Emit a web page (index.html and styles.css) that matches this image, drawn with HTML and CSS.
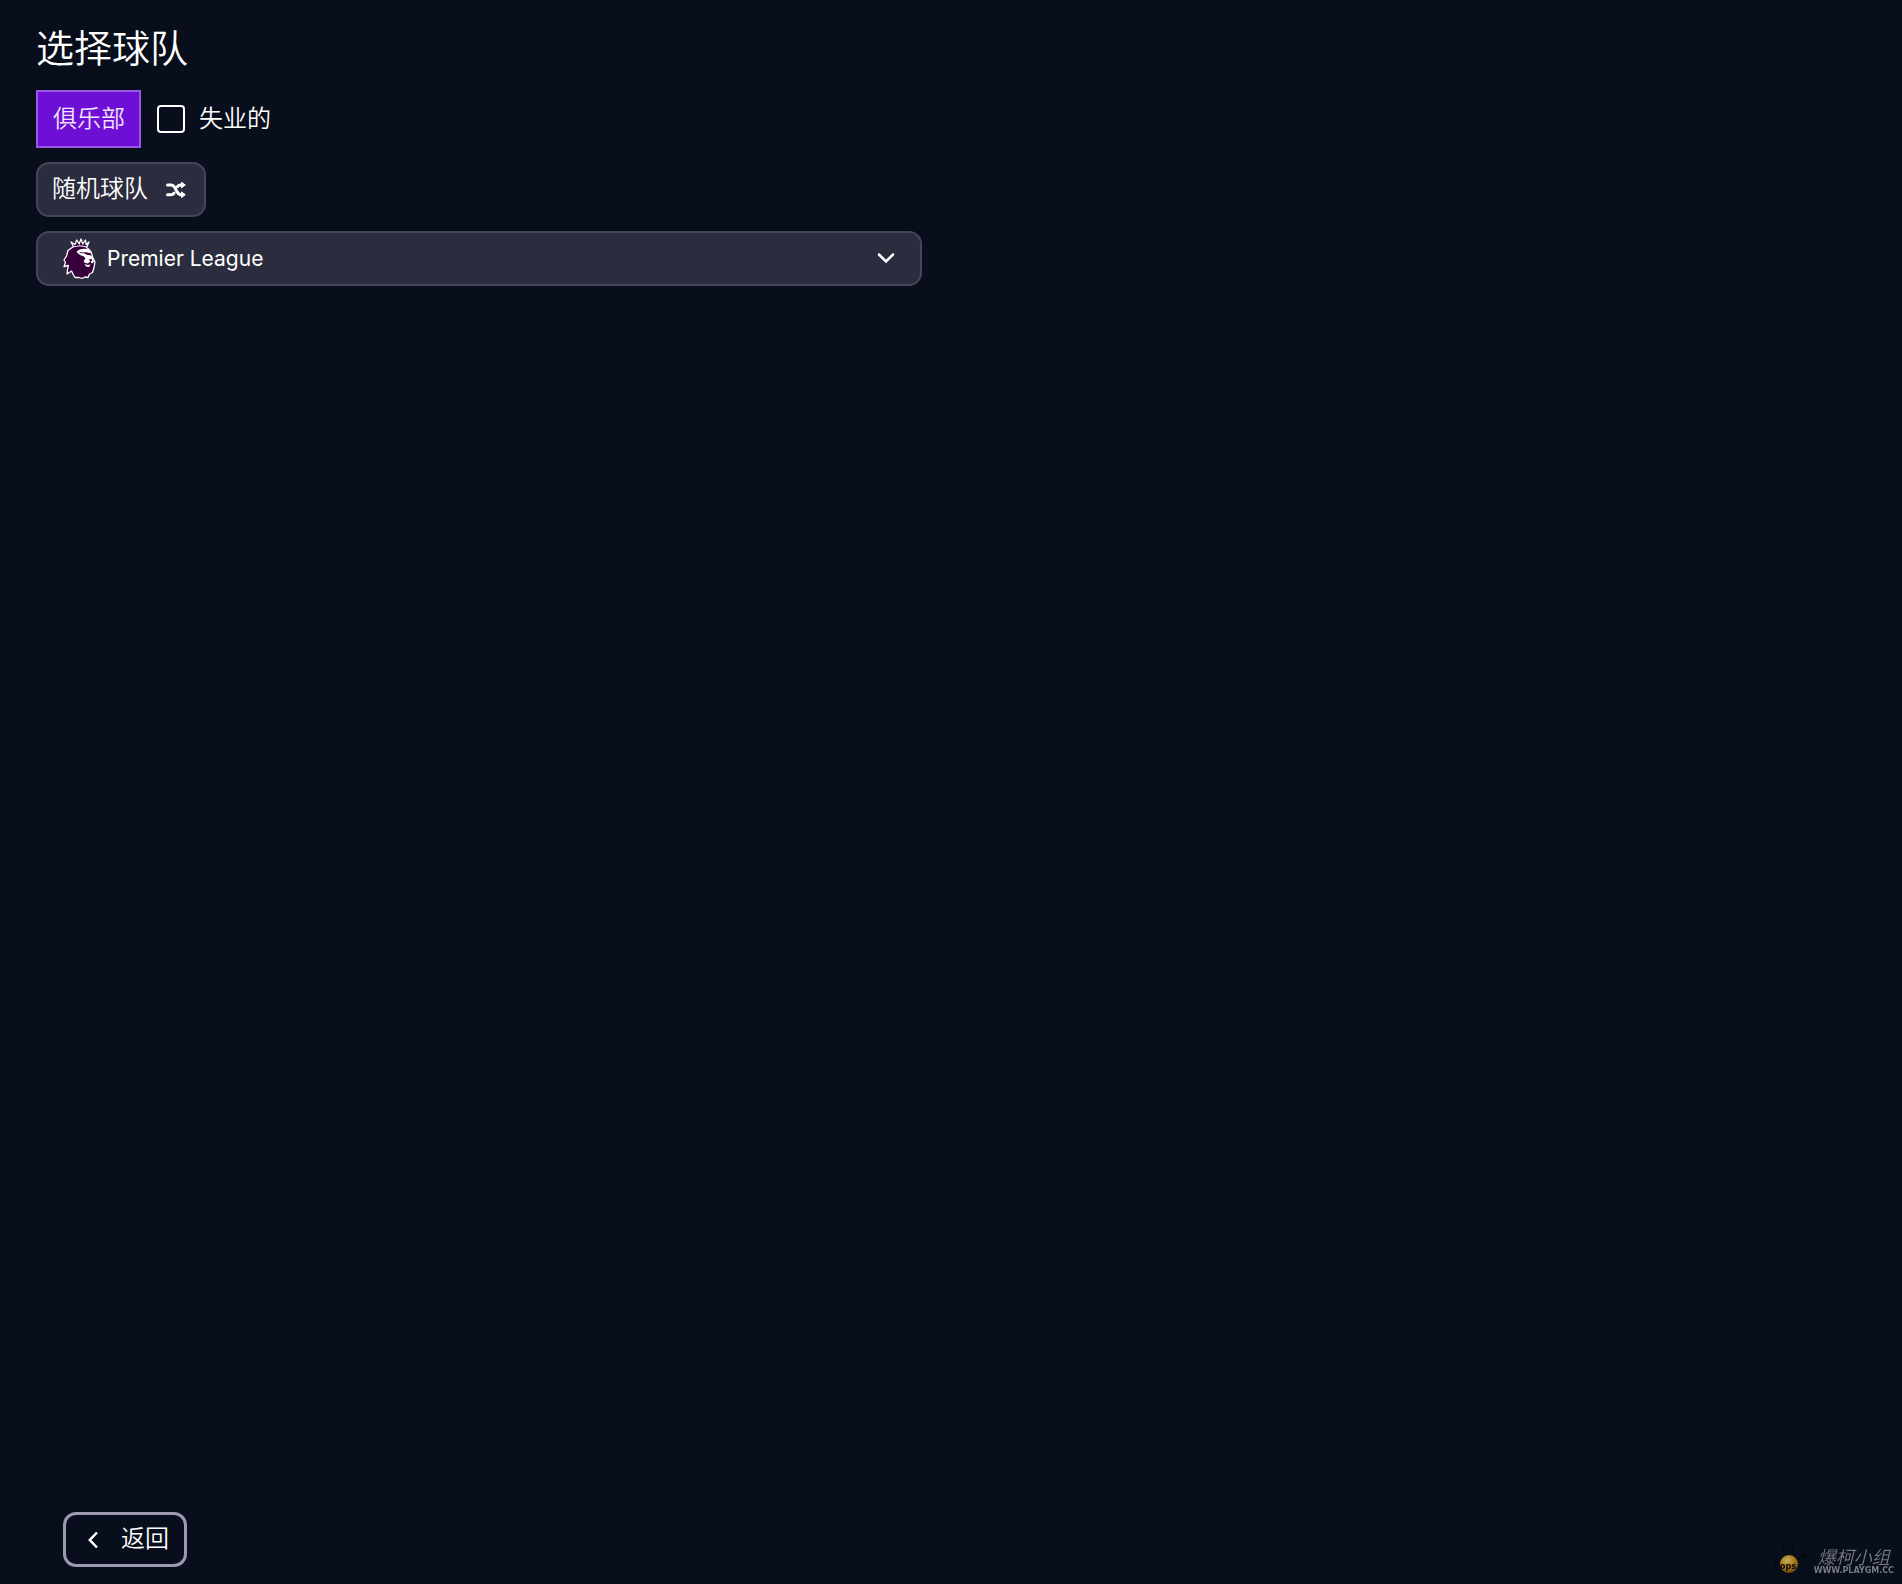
FILE: index.html
```html
<!DOCTYPE html>
<html lang="zh-CN">
<head>
    <meta charset="UTF-8">
    <meta name="viewport" content="width=device-width, initial-scale=1.0">
    <title>选择球队</title>
    <link rel="stylesheet" href="styles.css">
</head>
<body>
    <main class="page">
        <form class="team-form">
            <h1>选择球队</h1>
            <!-- Team type -->
            <div class="type-row">
                <button type="button" class="tab-button">俱乐部</button>
                <div class="check-group">
                    <input type="checkbox" id="unemployed" name="unemployed">
                    <label for="unemployed">失业的</label>
                </div>
            </div>
            <!-- Random team -->
            <button type="button" class="random-button">
                <span class="button-text">随机球队</span>
                <svg class="shuffle-icon" viewBox="0 0 20 18" aria-hidden="true">
                    <path d="M1.500 4h3.500c2 0 3 1 4 2.800l2 4c1 1.800 2 2.900 4 2.900h1M1.500 13.700h3.500c1.300 0 2.200-.5 3-1.500M11.500 5.500C12.300 4.500 13.200 4 14.500 4H16" fill="none" stroke="#fff" stroke-width="3" stroke-linecap="round"/>
                    <path d="M15.500 1.200v5.600L19.300 4zM15.500 10.900v5.600l3.800-2.800z" fill="#fff" stroke="#fff" stroke-linejoin="round"/>
                </svg>
            </button>
            <!-- League selection -->
            <div class="league-field">
                <svg class="league-logo" viewBox="0 0 34 42" aria-hidden="true">
                    <path d="M10.500 8.500L8 4l4 2.500 1.700-4.500 2.500 4L18 1l1.800 5 2.700-4 .5 4.500L26 4l-2.500 5.500c3.500 2 5.500 5 6 9.500l2.500 5-1 5.500-1.500 5-3 1.500-1.500 3.500-3-.5-3 1.500-3-1-4 0-1.500-2.500-2-4-4.500 3 .5-4 .8-4.500L1 28.500l1.500-4L1 22l2.500-4L5 12.500z" fill="#37003c" stroke="#fff" stroke-width="1.300" stroke-linejoin="round"/>
                    <path d="M10.500 8.800q6.500-2 13 0" fill="none" stroke="#fff"/>
                    <path d="M13.500 14c2-3 8-4 12.500-2.500l2.500 4-4-1-5-.5 3.500 2.500 5 1 2 2.500 1 4-2 1.500-2-2-2 2-3-.5-1.500-2 2-2.500-1.500-2-4-1.500z" fill="#fff"/>
                    <path d="M21.500 26l3 1 3-.5-1.500 2.500-3-.5z" fill="#fff"/>
                    <path d="M26.500 21.500l2.500.3-1.300 1.800zM16.500 14.300l4 .8" fill="#37003c" stroke="#37003c" stroke-width=".8"/>
                </svg>
                <select class="league-select" id="league" name="league" aria-label="联赛">
                    <option value="premier-league">Premier League</option>
                </select>
                <svg class="chevron-icon" viewBox="0 0 20 14" aria-hidden="true">
                    <path d="M3 3.500l7 7 7-7" fill="none" stroke="#fff" stroke-width="2.500" stroke-linecap="round"/>
                </svg>
            </div>
        </form>
        <footer class="page-footer">
            <button type="button" class="back-button">
                <svg class="back-icon" viewBox="0 0 12 18" aria-hidden="true">
                    <path d="M10 1.500L2.800 9l7.200 7.500" fill="none" stroke="#fff" stroke-width="2.500"/>
                </svg>
                <span class="button-text">返回</span>
            </button>
        </footer>
    </main>
    <!-- Site mark in the corner -->
    <div class="site-mark">
        <svg class="mark-ball" viewBox="0 0 40 34" aria-hidden="true">
            <defs>
                <radialGradient id="ball" cx=".4" cy=".3" r=".8">
                    <stop offset="0" stop-color="#c4ab5c"/>
                    <stop offset=".5" stop-color="#a97a1b"/>
                    <stop offset="1" stop-color="#5a3a08"/>
                </radialGradient>
            </defs>
            <path d="M15 9l-3-6M22 8l2-5M9 13L4 9M28 15l6-3 3 1M34 12l1-3M9 17c-5 1-6 5-3 7" fill="none" stroke="#04070e" stroke-width="1.500"/>
            <circle cx="19" cy="20" r="9" fill="url(#ball)"/>
            <text x="10" y="25" class="ball-text">ops</text>
        </svg>
        <div class="mark-text">
            <span class="mark-name">爆柯小组</span>
            <span class="mark-url">WWW.PLAYGM.CC</span>
        </div>
    </div>
</body>
</html>
```
FILE: styles.css
```css
* {
    box-sizing: border-box;
}
body {
    margin: 0;
    background: #080e1b;
    color: #fff;
    font-family: "Noto Sans CJK SC", sans-serif;
    font-weight: 350;
}
.page {
    min-height: 100vh;
    display: flex;
    flex-direction: column;
    padding: 18px 36px 17px;
}
.team-form {
    width: calc(50% - 29px);
    display: flex;
    flex-direction: column;
    align-items: flex-start;
    gap: 14px;
}
h1 {
    margin: 0 0 2px;
    font-size: 38px;
    font-weight: 350;
    line-height: 56px;
}
button, select {
    font: inherit;
    font-size: 24px;
    color: #fff;
    cursor: pointer;
}
.type-row {
    display: flex;
    align-items: center;
    gap: 16px;
}
.tab-button {
    height: 58px;
    padding: 0 14px 6px 15px;
    background: #6e0fd5;
    border: 2px solid #9a57e2;
    color: #efe3fb;
}
.check-group {
    display: flex;
    align-items: center;
    gap: 14px;
    font-size: 24px;
}
.check-group label, .button-text {
    padding-bottom: 6px;
}
.check-group input {
    appearance: none;
    width: 28px;
    height: 28px;
    margin: 0;
    border: 2px solid #fff;
    border-radius: 4px;
}
.random-button {
    height: 55px;
    display: flex;
    align-items: center;
    gap: 18px;
    padding: 0 18px 0 14px;
    background: #2b2d3e;
    border: 2px solid #454657;
    border-radius: 13px;
}
.shuffle-icon {
    width: 20px;
    height: 18px;
}
.league-field {
    position: relative;
    width: 100%;
}
.league-select {
    appearance: none;
    width: 100%;
    height: 55px;
    padding: 0 60px 0 69px;
    background: #2b2d3e;
    border: 2px solid #454657;
    border-radius: 13px;
    font-family: Inter, "Noto Sans CJK SC", sans-serif;
    font-size: 21px;
    font-weight: 400;
}
/* Logo and arrow lie over the select */
.league-logo {
    position: absolute;
    left: 27px;
    top: 7px;
    width: 34px;
    height: 42px;
    pointer-events: none;
}
.chevron-icon {
    position: absolute;
    right: 26px;
    top: 20px;
    width: 20px;
    height: 14px;
    pointer-events: none;
}
.page-footer {
    margin-top: auto;
    padding-left: 27px;
}
.back-button {
    height: 55px;
    display: flex;
    align-items: center;
    gap: 22px;
    padding: 0 15px 0 21px;
    background: transparent;
    border: 3px solid #9b9aae;
    border-radius: 13px;
}
.back-icon {
    width: 12px;
    height: 18px;
}
/* Site mark */
.site-mark {
    position: fixed;
    right: 8px;
    bottom: 6px;
    display: flex;
    align-items: center;
    gap: 4px;
    color: #777b83;
}
.mark-ball {
    width: 40px;
    height: 34px;
}
.ball-text {
    font: bold 8px "DejaVu Sans", sans-serif;
    fill: #050505;
}
.mark-text {
    display: flex;
    flex-direction: column;
    align-items: center;
}
.mark-name {
    font-size: 18px;
    font-style: italic;
    line-height: 20px;
}
.mark-url {
    font: bold 8px "DejaVu Sans", sans-serif;
    line-height: 10px;
}
```
